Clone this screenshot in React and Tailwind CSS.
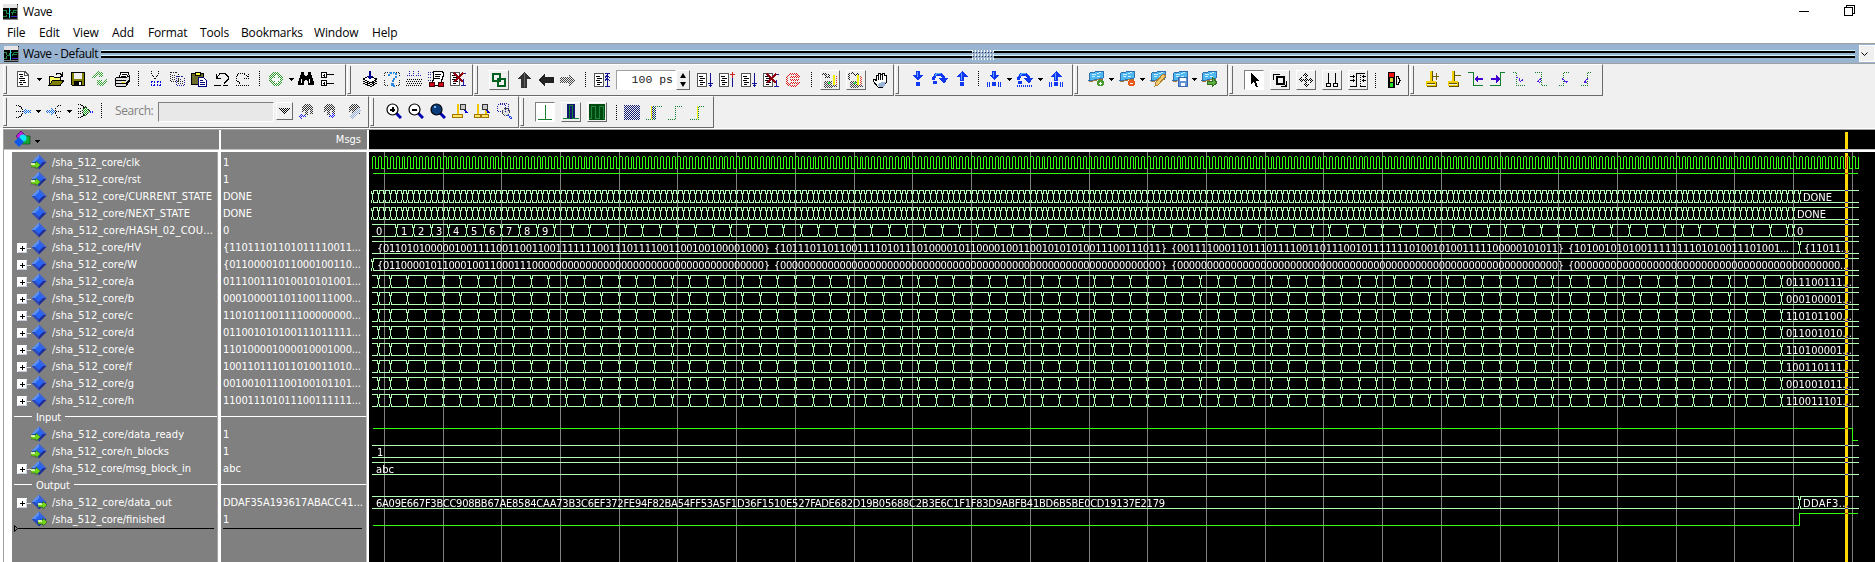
import React from "react";

/* ---------- icon helpers ---------- */
const Ico = ({ children, dis, s = 16, className = "" }) => (
  <span className={"flex h-[22px] w-[22px] shrink-0 items-center justify-center " + className}>
    <svg width={s} height={s} viewBox={`0 0 ${s} ${s}`} shapeRendering="crispEdges" fill="none" className="block">
      <g mask={dis ? "url(#dither)" : undefined}>{children}</g>
    </svg>
  </span>
);

const Caret = ({ className = "w-[11px]" }) => (
  <span className={"flex h-[22px] shrink-0 items-center justify-center " + className}>
    <svg width="5" height="3" viewBox="0 0 5 3" shapeRendering="crispEdges"><path d="M0 0h5v1H0zM1 1h3v1H1zM2 2h1v1H2z" fill="#000" /></svg>
  </span>
);

const Sep = ({ className = "w-[11px]" }) => (
  <span className={"flex h-[22px] shrink-0 items-center justify-center " + className}>
    <svg width="1" height="16" viewBox="0 0 1 16" shapeRendering="crispEdges"><path d="M.5 0v16" stroke="#000" strokeDasharray="1 1" /></svg>
  </span>
);

const Btn = ({ children, on, className = "" }) => (
  <span
    className={
      "flex h-5 w-5 shrink-0 items-center justify-center border " +
      (on ? "border-t-[#808080] border-l-[#808080] border-r-white border-b-white bg-white " : "border-t-white border-l-white border-r-[#696969] border-b-[#696969] bg-[#f0f0f0] ") +
      className
    }
  >
    <svg width="16" height="16" viewBox="0 0 16 16" shapeRendering="crispEdges" fill="none">{children}</svg>
  </span>
);

const Group = ({ w, pt = "pt-[3px]", pl = "pl-[5px]", children }) => (
  <div className={"flex h-8 shrink-0 border-r border-b border-[#696969] border-t border-t-white mr-[1px] " + w}>
    <div className="mt-px h-[28px] w-[4px] shrink-0 border-r border-b border-[#696969] border-l border-l-white" />
    <div className={"flex items-start " + pt + " " + pl}>{children}</div>
  </div>
);

const WaveIcon = () => (
  <svg width="15" height="16" viewBox="0 0 15 16" shapeRendering="crispEdges" fill="none">
    <rect width="15" height="16" fill="#222" />
    <rect width="14" height="4" fill="#e4e4e4" />
    <rect y="4" width="14" height="10" fill="#000" />
    <path d="M0 6.500h3v3h3v-3h2M8 8.500h2v-2h4M0 12.500h3v-2M9 10.500v-2h4" stroke="#1c8a3c" />
    <path d="M6.500 4v10" stroke="#38d8e8" />
    <path d="M8 12.500h6" stroke="#3c28c8" />
    <path d="M14.500 1v15M0 15h15" stroke="#808080" />
  </svg>
);

/* ---------- drawings for the tool bars ---------- */
const Page = ({ x = 0 }) => (
  <g>
    <path d={`M${x + 0.5} 1.500h9v13h-9z`} fill="#fff" stroke="#555" />
    <path d={`M${x + 2} 4.500h4M${x + 3} 6.500h5M${x + 2} 8.500h4M${x + 3} 10.500h5M${x + 3} 12.500h3`} stroke="#000" />
  </g>
);
const NewDoc = () => (
  <g>
    <path d="M2 .5h8l3 3v12H2z" fill="#fff" stroke="#555" />
    <path d="M9.500 1v3h3" stroke="#555" />
    <path d="M4 3.500h4M5 5.500h3M4 7.500h6M5 9.500h5M4 11.500h3M8 11.500h3M5 13.500h3" stroke="#000" />
  </g>
);
const Open = () => (
  <g>
    <path d="M1 14V6l1-1h3l1 1h6v3" fill="#ffff66" stroke="#000" />
    <path d="M1 14.500l4-5.500h11l-4 5.500z" fill="#808000" stroke="#000" />
    <path d="M8 3.500l1-1h3l2 2M14.500 1v4h-3" stroke="#000" />
  </g>
);
const Save = () => (
  <g>
    <path d="M1.500 1.500h13v13h-12l-1-1z" fill="#808000" stroke="#000" />
    <path d="M4 2h8v6H4z" fill="#f0f0f0" />
    <path d="M4 10h8v4H4z" fill="#000" />
    <path d="M9 11h2v3H9z" fill="#fff" />
  </g>
);
const Refresh = () => (
  <g fill="#38a838">
    <path d="M0 7l2-4 4-3 4 1 1-1v6H5l2-2-2 0-2 3z" />
    <path d="M16 8l-2 4-4 3-4-1-1 1V9h6l-2 2 2 0 2-3z" />
  </g>
);
const Print = () => (
  <g>
    <path d="M5 7l2-6h8l-2 6" fill="#fff" stroke="#000" />
    <path d="M8 3.500h5M7 5.500h5" stroke="#000" />
    <path d="M1 8l2-2h10l2-1v6l-3 4H2l-1-2z" fill="#e0e0e0" stroke="#000" />
    <path d="M1 9.500h11M2 12.500h10l3-3" stroke="#000" />
    <path d="M8 11h3v1H8z" fill="#ffea00" />
  </g>
);
const Cut = () => (
  <g>
    <path d="M4.500 0v3l4 6M11.500 0v3l-4 6" stroke="#000" strokeDasharray="1 1" />
    <path d="M4 10h3v4H4zM10 10h3v4h-3z" stroke="#0000e0" strokeDasharray="2 1" />
  </g>
);
const Copy = () => (
  <g>
    <path d="M1.500 1.500h6l2 2v7h-8z" stroke="#222" strokeDasharray="1 1" />
    <path d="M7.500 5.500h6l2 2v7h-8z" stroke="#2020a0" strokeDasharray="1 1" />
    <path d="M3 4.500h4M3 6.500h4M3 8.500h4M9 8.500h4M9 10.500h5M9 12.500h5" stroke="#333" strokeDasharray="1 1" />
  </g>
);
const Paste = () => (
  <g>
    <path d="M.5 2.500h12v11H.5z" fill="#6b6b2a" stroke="#000" />
    <path d="M4 1h5v3H4z" fill="#ffff40" stroke="#000" />
    <path d="M7.500 6.500h5l3 3v6h-8z" fill="#fff" stroke="#000080" />
    <path d="M9 9.500h3M9 11.500h5M9 13.500h5" stroke="#000080" />
  </g>
);
const Undo = () => (
  <g stroke="#000">
    <path d="M3 7.500V3M3 7.500h4.500M3.500 7L7 2.500h5l3 3v3l-4 4" />
    <path d="M1 14.500h14" strokeDasharray="7 2" />
  </g>
);
const Redo = () => (
  <g stroke="#000" strokeDasharray="1 1">
    <path d="M13.500 3v5M13.500 7.500H9M13 6L9 2.500H4L1 5.500v3l4 4" />
    <path d="M1 14.500h14" />
  </g>
);
const AddCircle = () => (
  <g>
    <circle cx="8" cy="8" r="7" fill="#2fa02f" />
    <path d="M6.500 4h3v2.500H12v3H9.500V12h-3V9.500H4v-3h2.500z" fill="#fff" />
  </g>
);
const Binoc = ({ c = "#000" }) => (
  <g fill={c}>
    <path d="M3 1h3v3H3zM10 1h3v3h-3zM2 4h5v3H2zM9 4h5v3H9zM1 7h6v3H1zM9 7h6v3H9zM0 10h6v4H0zM10 10h6v4h-6zM6 5h4v4H6z" />
    <path d="M3 8h1v4H3zM11 8h1v4h-1z" fill="#fff" />
  </g>
);
const Tree = () => (
  <g stroke="#000">
    <path d="M1.500 1.500h5v5h-5zM1.500 9.500h5v5h-5z" fill="#fff" />
    <path d="M3 4.500h2M4.500 3v3M3 12.500h2M4.500 11v3M7 3.500h7M7 12.500h7" />
  </g>
);
const Stack = () => (
  <g stroke="#000">
    <path d="M1 8l6-3 8 3-6 4zM1 10l8 3.500 6-3.500M1 12l8 3.500 6-3.500" fill="#fff" />
    <path d="M8 0v5" stroke="#000090" strokeWidth="2" />
    <path d="M5 5h6L8 8.500z" fill="#000090" stroke="none" />
  </g>
);
const Question = () => (
  <g>
    <path d="M.5 5V1.500h3M12 1.500h3.500V5M15.500 9v5.500h-4M4 14.500H.5V9" stroke="#222" strokeDasharray="1 1" />
    <path d="M5 5V3l2-1.500h3L12 3v3L8.500 9v2M8 13h2v2H8z" stroke="#2a88e0" strokeWidth="2" strokeDasharray="2 1" />
  </g>
);
const Grid = () => (
  <g>
    <path d="M1 8.500h15M0 10.500h15M1 12.500h15M0 14.500h15" stroke="#000" strokeDasharray="1 1" />
    <path d="M3.500 0v6M12.500 0v6M1 4.500h5M10 4.500h5M7.500 0v5" stroke="#2020b0" strokeDasharray="1 1" />
  </g>
);
const Truck = () => (
  <g>
    <path d="M5 .5h9l2 2-4 12H3l2-5z" fill="#fff" stroke="#000" />
    <path d="M7 3.500h6M7 5.500h5M6 7.500h6" stroke="#000" />
    <path d="M0 1.500h5M0 3.500h4M0 6.500h4M0 9.500h3" stroke="#2a2a9a" strokeDasharray="1 1" />
    <path d="M1 11h5v4H1zM10 11h5v4h-5z" fill="#d00018" stroke="#400" />
  </g>
);
const PageX = () => (
  <g>
    <Page />
    <path d="M11 2.500h5M13.500 8v6M11 14.500h5" stroke="#2020a0" />
    <path d="M4 2l9 9M13 2l-9 9" stroke="#900010" strokeWidth="2" />
  </g>
);
const ArrowUp = () => (
  <g>
    <path d="M8 0L1 7h4v9h6V7h4z" fill="#333" />
    <path d="M8 1v14" stroke="#666" />
  </g>
);
const ArrowLeft = ({ c = "#222" }) => <path d="M0 8l7-6v3h9v6H7v3z" fill={c} />;
const ArrowRight = ({ c = "#444" }) => <path d="M16 8L9 2v3H0v6h9v3z" fill={c} />;
const RunPage = ({ k }) => (
  <g>
    <Page />
    {k === "top" && <path d="M11 1.500h5M13.500 1v13M11 5.500l2-2 3 2M11 8.500l2-2 3 2M11 14.500h5" stroke="#101090" />}
    {k === "run" && <path d="M13.500 1v14M11 11.500h5M12 13.500h3" stroke="#101090" />}
    {k === "up" && <path d="M13.500 0v6M11 2.500h5" stroke="#d02020" />}
    {k === "up" && <path d="M13.500 6v9" stroke="#101090" />}
  </g>
);
const Stop = () => (
  <g stroke="#e02020" strokeWidth="2">
    <path d="M5 2h6l3 3v1M5 14h6l3-3v-1M2 5v6M5 5h8M5 8h9M5 11h8" />
    <path d="M2 5l3-3M2 11l3 3" />
  </g>
);
const Chart = ({ m }) => (
  <g>
    <path d={m ? "M1 8V2l3-1 3 2 3-1v5" : "M0 2h4v3h3V2"} stroke="#222" strokeWidth="1.500" mask="url(#dither)" />
    <path d="M2 9h8v7H2z" fill="#444" mask="url(#dither)" />
    <path d={m ? "M9 3h2v10H9z" : "M11 3h2v10h-2z"} fill="#f0f000" />
    <path d={m ? "M12 4h2v9h-2z" : "M14 3h1v10h-1z"} fill="#e04030" mask="url(#dither)" />
    <path d="M9 13h6v2H9z" fill="#444" mask="url(#dither)" />
    <path d="M6 10h2v2H6z" fill="#20e040" />
  </g>
);
const Hand = () => (
  <g>
    <path d="M4 9V3h2V1h2v1h2V1h2v2h2v8l-3 4H6L1 9V7h2z" fill="#fff" stroke="#000" />
    <path d="M6.500 3v5M8.500 3v5M10.500 3v5" stroke="#000" />
    <path d="M6 12l4-2 4 0-2 5H7z" fill="#9ab4d8" />
  </g>
);
const BDown = ({ b }) => (
  <g fill="#1038f0">
    <path d={b ? "M6 0h4v4h3L8 9 3 4h3zM6 11h4v4H6z" : "M6 0h4v4h3L8 10 3 4h3zM6 11h4v4H6z"} />
    {b && <path d="M1 11h1v5H1zM3 11h1v5H3zM12 11h1v5h-1zM14 11h1v5h-1z" />}
    <path d="M7 1h1v5H7z" fill="#60a0ff" />
  </g>
);
const BUp = ({ b }) => (
  <g fill="#1038f0">
    <path d="M6 10h4V6h4L8 0 2 6h4zM6 11h4v4H6z" />
    {b && <path d="M1 11h1v5H1zM3 11h1v5H3zM12 11h1v5h-1zM14 11h1v5h-1z" />}
    <path d="M7 2h1v7H7z" fill="#60a0ff" />
  </g>
);
const BOver = ({ b }) => (
  <g>
    <path d="M1.500 9V7l3-4h4l3 3v3" stroke="#1038f0" strokeWidth="3" />
    <path d="M7 7h9l-4 6z" fill="#1038f0" />
    <path d="M1 10h4v3H1z" fill="#1038f0" />
    <path d="M3 4.500l2-2h4" stroke="#50b0ff" />
    {b && <path d="M0 15h16" stroke="#1038f0" strokeWidth="2" strokeDasharray="1 1" />}
  </g>
);
const Book = ({ k }) => (
  <g>
    <path d="M2 2l5-1 2-1h6v7l-4 1-5 1H1z" fill="#50b8f0" stroke="#3070b0" />
    <path d="M4 3h4M9 2.500l4-1M4 5h3M9 5.500h3" stroke="#c8f0ff" />
    <path d="M1 10h4l4-1 6-1" stroke="#a07840" />
    {k === "add" && <><circle cx="12.500" cy="12" r="3.500" fill="#4a9a30" /><path d="M11 12h3M12.500 10.500v3" stroke="#fff" /></>}
    {k === "del" && <><circle cx="12.500" cy="12" r="3.500" fill="#e85a18" /><path d="M11 12h3" stroke="#fff" /></>}
    {k === "edit" && <path d="M5 15l1-4 7-8 3 2-8 9z" fill="#f0c870" stroke="#b08030" />}
    {k === "save" && <><path d="M6.500 6.500h9v9h-9z" fill="#6090d8" stroke="#3868b0" /><path d="M8 7h6v3H8zM9 12h4v3H9z" fill="#fff" /></>}
    {k === "go" && <path d="M6 10h5V6l5 5.500-5 4.500v-3H6z" fill="#60b040" stroke="#307020" />}
  </g>
);
const Mag = ({ k }) => (
  <g>
    <path d="M10 10l5 5" stroke="#0000b0" strokeWidth="3" shapeRendering="auto" />
    <circle cx="6.500" cy="6.500" r="5.500" fill={k === "full" ? "#0a3c7c" : "#fff"} stroke="#000" shapeRendering="auto" strokeWidth="1.200" />
    {k !== "full" && <path d="M4 6.500h5" stroke="#000" strokeWidth="2" />}
    {k === "in" && <path d="M6.500 4v5" stroke="#000" strokeWidth="2" />}
    {k === "full" && <path d="M4 3h2v2H4z" fill="#80b8f0" />}
  </g>
);
const Post = ({ x = 0, w = 9 }) => (
  <g>
    <path d={`M${x + Math.floor(w / 2)} 1h2v10h-2z`} fill="#f0c800" />
    <path d={`M${x + 0.5} 11.500h${w - 1}v3h-${w - 1}z`} fill="#ffe860" stroke="#a07000" />
  </g>
);
const SmallMag = () => (
  <g>
    <path d="M12 6l3 4" stroke="#0000d0" strokeWidth="2" />
    <circle cx="11" cy="4" r="3" fill="#c8c8c8" stroke="#333" />
  </g>
);
const MergeIco = ({ k }) => (
  <g>
    {k === "l" && <><path d="M1 2.500h3l4 4M1 14.500h3l4-4M1 8.500h7" stroke="#000" strokeDasharray="1 1" /><path d="M7 8l4-4v3h5v3h-5v3z" fill="#1070e8" mask="url(#dither)" /></>}
    {k === "r" && <><path d="M15 2.500h-3l-3 4v4l3 4h3M10 8.500h6" stroke="#000" strokeDasharray="1 1" /><path d="M9 8L5 4v3H0v3h5v3z" fill="#1070e8" mask="url(#dither)" /></>}
    {k === "g" && <><path d="M1 1.500h3l3 3M1 5.500h3M1 10.500h3M1 14.500h3l3-3M1 8.500h3" stroke="#000" strokeDasharray="1 1" /><path d="M8 3l5 5-5 5-3-5z" fill="#18a018" mask="url(#dither)" /><path d="M8 3l5 5-5 5-3-5z" stroke="#222" strokeDasharray="1 1" /><path d="M13 8.500h3" stroke="#2020f0" strokeWidth="2" strokeDasharray="1 1" /></>}
  </g>
);
const FindIco = ({ k }) => (
  <g>
    <path d="M4 10V5l3-4h6l2 4v6h-3V7h-2v5H7V8" fill="#333" mask="url(#dither)" />
    {k === "l" && <path d="M0 13l4-4v3h4v2H4v2z" fill="#2020f0" mask="url(#dither)" />}
    {k === "r" && <path d="M16 13l-4-4v3H9v2h3v2z" fill="#2020f0" mask="url(#dither)" />}
    {k === "p" && <path d="M6 15l9-9" stroke="#90b0d8" strokeWidth="3" mask="url(#dither)" />}
  </g>
);
const Anchor = ({ k }) => (
  <g>
    <path d="M6 0h2v11H6z" fill="#f0d000" />
    <path d="M8.500 0v11" stroke="#605000" />
    <path d={k === "+" ? "M9 5.500h6M12.500 2v7" : "M9 4.500h6"} stroke="#706000" />
    <path d="M2 10h10v5H2z" fill="#f0d000" />
    <path d="M3 12h8v2H3z" fill="#f0f0f0" />
    <path d="M3 15h10v1H3zM12 11h1v4h-1zM3 12h8v1H3z" fill="#605000" />
  </g>
);
const Edge = ({ k }) => {
  const D = {
    prev: ["M0 1.500h5.500v13H15", "M6 8l4-4v3h5v2h-5v3z"],
    next: ["M15 1.500h-4.500v13H0", "M10 8L6 4v3H1v2h5v3z"],
  };
  return (
    <g>
      <path d={D[k][0]} stroke="#108030" />
      <path d={D[k][1]} fill="#4000d0" />
    </g>
  );
};
const EdgeDis = ({ k }) => {
  const D = {
    a: ["M1 1.500h3.500v13H13", "M4 6.500h3v3l2 1 2-2"],
    b: ["M1 1.500h6.500v13H13", "M7 7.500l-3 3h3l-2 1"],
    c: ["M13 1.500H7.500v13H3", "M6 7.500l3 3h2l-1 1"],
    d: ["M13 1.500h-3.500v13H2", "M10 7.500l-4 4h3l-3-1"],
  };
  return (
    <g>
      <path d={D[k][0]} stroke="#108030" strokeDasharray="1 1" />
      <path d={D[k][1]} stroke="#5020e0" strokeDasharray="2 1" />
    </g>
  );
};

/* ---------- tool bars ---------- */
const Toolbars = () => (
  <div className="h-16 bg-[#f0f0f0] pl-[3px]">
    <div className="flex h-8">
      <Group w="w-[343px]">
        <Ico><NewDoc /></Ico><Caret /><Ico><Open /></Ico><Ico><Save /></Ico><Ico dis><Refresh /></Ico><Ico><Print /></Ico>
        <Sep /><Ico><Cut /></Ico><Ico><Copy /></Ico><Ico><Paste /></Ico><Ico><Undo /></Ico><Ico><Redo /></Ico>
        <Sep /><Ico dis><AddCircle /></Ico><Caret className="w-[8px]" /><Ico><Binoc /></Ico><Ico><Tree /></Ico>
      </Group>
      <Group w="w-[126px]" pl="pl-[8px]">
        <Ico><Stack /></Ico><Ico><Question /></Ico><Ico><Grid /></Ico><Ico><Truck /></Ico><Ico><PageX /></Ico>
      </Group>
      <Group w="w-[420px]" pt="pt-[5px]" pl="pl-[11px]">
        <Btn className="mr-1">
          <path d="M2 2h7v7H2zM7 7h7v7H7z" stroke="#006020" strokeWidth="2" />
        </Btn>
        <div className="-mt-px flex">
          <Ico><ArrowUp /></Ico><Ico><ArrowLeft /></Ico><Ico dis><ArrowRight /></Ico><Sep className="w-[12px]" />
          <Ico><RunPage k="top" /></Ico>
        </div>
        <div className="ml-[3px] flex h-5 w-[60px] items-center justify-end border border-[#a0a0a0] border-r-white border-b-white bg-white pr-[2px] font-['Liberation_Mono'] text-[11.5px] leading-none text-[#202020]">100 ps</div>
        <div className="flex h-5 w-[14px] flex-col items-center justify-around border border-white border-r-[#696969] border-b-[#696969]">
          <svg width="6" height="5" viewBox="0 0 6 5"><path d="M0 5l3-5 3 5z" /></svg>
          <svg width="6" height="5" viewBox="0 0 6 5"><path d="M0 0l3 5 3-5z" /></svg>
        </div>
        <div className="ml-[4px] -mt-px flex">
          <Ico><RunPage k="run" /></Ico><Ico><RunPage k="up" /></Ico><Ico><RunPage k="run" /></Ico><Ico><PageX /></Ico><Ico dis className="w-[20px]"><Stop /></Ico><Sep className="w-[14px]" />
        </div>
        <Btn className="ml-[2px]"><Chart /></Btn>
        <Btn className="mx-[6px]"><Chart m /></Btn>
        <Ico className="-mt-px -ml-[3px]"><Hand /></Ico>
      </Group>
      <Group w="w-[178px]" pl="pl-[8px]">
        <Ico><BDown /></Ico><Ico><BOver /></Ico><Ico><BUp /></Ico><Sep className="w-[10px]" />
        <Ico><BDown b /></Ico><Caret className="w-[9px]" /><Ico><BOver b /></Ico><Caret className="w-[9px]" /><Ico><BUp b /></Ico>
      </Group>
      <Group w="w-[154px]" pl="pl-[7px]">
        <Ico><Book k="add" /></Ico><Caret className="w-[9px]" /><Ico><Book k="del" /></Ico><Caret className="w-[9px]" />
        <Ico><Book k="edit" /></Ico><Ico><Book k="save" /></Ico><Caret className="w-[7px]" /><Ico><Book k="go" /></Ico>
      </Group>
      <Group w="w-[180px]" pt="pt-[5px]" pl="pl-[11px]">
        <Btn on className="mr-[6px]"><path d="M5 1v11l3-2 2 5h2l-2-6h3z" fill="#000" /></Btn>
        <Btn className="mr-[6px]"><path d="M1.500 8V2.500H8M14.500 9v5.500H9" stroke="#000" /><path d="M5 5h7v7H5z" stroke="#000" strokeWidth="2" /><path d="M12 12l3 3" stroke="#000" /></Btn>
        <Btn className="mr-[6px]"><g mask="url(#dither)"><path d="M8 0l3 4H9v3h3V5l4 3-4 3V9H9v3h2l-3 4-3-4h2V9H4v2L0 8l4-3v2h3V4H5z" fill="#000" /></g></Btn>
        <Btn className="mr-[6px]"><path d="M4.500 1v10M11.500 1v10M2.500 11.500h4v3h-4zM9.500 11.500h4v3h-4z" stroke="#000" /></Btn>
        <Btn><path d="M0 4.500h5M3.500 3v3M0 8.500h5M3.500 7v3M0 14.500h6.500V1.500h8M12 4.500h4M12 8.500h4M13.500 3v3M13.500 7v3M10 14.500h6" stroke="#000" /><path d="M10.500 3v11" stroke="#000" strokeDasharray="1 1" /></Btn>
        <Sep className="w-[15px]" />
        <Ico className="-mt-px">
          <path d="M2 0h7v16H2z" fill="#000" />
          <circle cx="5.500" cy="3" r="2.500" fill="#f01010" /><circle cx="5.500" cy="8" r="2" fill="#d8d840" /><circle cx="5.500" cy="13" r="2" fill="#20e030" />
          <path d="M10.500 4v9M11 4.500h1l2 4-2 4h-1" stroke="#000" />
        </Ico>
      </Group>
      <Group w="w-[193px]" pl="pl-[7px]">
        <Ico><Anchor k="+" /></Ico><Ico><Anchor k="-" /></Ico><Ico><Edge k="prev" /></Ico><Ico><Edge k="next" /></Ico>
        <Ico><EdgeDis k="a" /></Ico><Ico><EdgeDis k="b" /></Ico><Ico><EdgeDis k="c" /></Ico><Ico><EdgeDis k="d" /></Ico>
      </Group>
    </div>
    <div className="flex h-8">
      <Group w="w-[366px]">
        <Ico><MergeIco k="l" /></Ico><Caret className="w-[9px]" /><Ico><MergeIco k="r" /></Ico><Caret className="w-[9px]" /><Ico><MergeIco k="g" /></Ico>
        <Sep />
        <span className="ml-[8px] flex h-[22px] w-[43px] items-center font-['Open_Sans'] text-[12px] tracking-[-0.4px] text-[#808080]">Search:</span>
        <span className="mt-[2px] h-5 w-[116px] border border-[#808080] border-r-white border-b-white bg-[#e8e8e8]" />
        <span className="mt-[2px] ml-[2px] flex h-[18px] w-[17px] items-center justify-center border border-white border-r-[#696969] border-b-[#696969]">
          <svg width="11" height="6" viewBox="0 0 11 6" shapeRendering="crispEdges"><path d="M0 0h11L6 6H5z" fill="#000" mask="url(#dither)" /></svg>
        </span>
        <Ico className="ml-[2px] w-[20px]"><FindIco k="l" /></Ico><Ico className="w-[20px]"><FindIco k="r" /></Ico><Ico className="ml-[3px]"><FindIco k="p" /></Ico>
      </Group>
      <Group w="w-[149px]" pl="pl-[9px]">
        <Ico><Mag k="in" /></Ico><Ico><Mag k="out" /></Ico><Ico><Mag k="full" /></Ico>
        <Ico><Post w={11} /><SmallMag /></Ico><Ico><Post w={7} /><Post x={7} w={8} /><SmallMag /></Ico>
        <Ico><path d="M1.500 1.500h8v7h-8zM4 .5h8v8" stroke="#2020a0" strokeDasharray="1 1" /><circle cx="10" cy="9" r="3.500" stroke="#444" fill="#ccc" mask="url(#dither)" /><circle cx="10" cy="9" r="3.500" stroke="#444" strokeDasharray="1 1" /><path d="M12 12l4 4" stroke="#2040e0" strokeWidth="2" strokeDasharray="1 1" /></Ico>
      </Group>
      <Group w="w-[194px]" pt="pt-[5px]" pl="pl-[11px]">
        <Btn on className="mr-[6px]"><path d="M8.500 1v14M1 15.500h14" stroke="#108030" /></Btn>
        <Btn className="mr-[6px]"><path d="M4 0h8v15H4z" fill="#101870" /><path d="M0 14.500h6.500v-13h3v13H16" stroke="#108030" /></Btn>
        <Btn><path d="M0 0h16v16H0z" fill="#004a10" /><path d="M0 14.500h2v-12h4v12h4v-12h4v12h2" stroke="#208840" /></Btn>
        <Sep className="w-[14px] pl-[4px]" />
        <Ico dis><path d="M0 0h16v15H0z" fill="#101870" /></Ico>
        <Ico><path d="M5 1h5v13H5z" fill="#101870" mask="url(#dither)" /><path d="M5.500 1v13" stroke="#e0e000" /><path d="M0 14.500h8.500v-13H16" stroke="#108030" strokeDasharray="1 1" /></Ico>
        <Ico><path d="M0 14.500h7.500v-13H15" stroke="#108030" strokeDasharray="1 1" /></Ico>
        <Ico><path d="M7.500 1v13" stroke="#f0f000" /><path d="M0 14.500h8.500v-13H15" stroke="#108030" strokeDasharray="1 1" /></Ico>
      </Group>
    </div>
  </div>
);

/* ---------- signal table: w and vw are the text widths in the two columns ---------- */
const P = "/sha_512_core/";
const ROWS = [
  { n: "clk", w: 88, v: "1", d: "in" },
  { n: "rst", w: 89, v: "1", d: "in" },
  { n: "CURRENT_STATE", w: 160, v: "DONE", vw: 29 },
  { n: "NEXT_STATE", w: 138, v: "DONE", vw: 29 },
  { n: "HASH_02_COU...", w: 161, v: "0" },
  { n: "HV", w: 89, v: "{11011101101011110011...", vw: 138, x: 1 },
  { n: "W", w: 85, v: "{01100001011000100110...", vw: 138, x: 1 },
  { n: "a", w: 82, v: "011100111010010101001...", vw: 138, x: 1 },
  { n: "b", w: 82, v: "000100001101100111000...", vw: 138, x: 1 },
  { n: "c", w: 81, v: "110101100111100000000...", vw: 138, x: 1 },
  { n: "d", w: 82, v: "011001010100111011111...", vw: 138, x: 1 },
  { n: "e", w: 82, v: "110100001000010001000...", vw: 138, x: 1 },
  { n: "f", w: 80, v: "100110111011010011010...", vw: 138, x: 1 },
  { n: "g", w: 82, v: "001001011100100101101...", vw: 138, x: 1 },
  { n: "h", w: 82, v: "110011101011100111111...", vw: 138, x: 1 },
  { div: "Input" },
  { n: "data_ready", w: 132, v: "1", d: "in" },
  { n: "n_blocks", w: 117, v: "1", d: "in" },
  { n: "msg_block_in", w: 139, v: "abc", vw: 18, d: "in", x: 1 },
  { div: "Output" },
  { n: "data_out", w: 120, v: "DDAF35A193617ABACC41...", vw: 140, d: "out", x: 1 },
  { n: "finished", w: 113, v: "1", d: "out" },
];

const Label = ({ w, box, children }) => (
  <svg width={box} height="17" viewBox={`0 0 ${box} 17`} className="block shrink-0">
    <text x="0" y="13" fontSize="11" fill="#fff" textLength={w} lengthAdjust="spacing">{children}</text>
  </svg>
);

const Diamond = ({ d }) => (
  <svg width="16" height="16" viewBox="0 0 16 16" className="mt-px shrink-0">
    <path d="M8 .5L.5 8h7.500z" fill="#5c90ee" /><path d="M8 .5L15.500 8H8z" fill="#3c64d8" />
    <path d="M.5 8L8 15.500V8z" fill="#2c48b8" /><path d="M15.500 8L8 15.500V8z" fill="#202c98" />
    <path d="M8 4l4 4-4 4-4-4z" fill="#2464f8" />
    {d === "in" && <g><path d="M0 9h5V7l4.500 4L5 15v-2H0z" fill="#70d818" stroke="#184808" strokeWidth=".5" /><path d="M0 10h4" stroke="#f8ffe0" strokeWidth="1.500" /></g>}
    {d === "out" && <g><path d="M7 9h5V7l4 4-4 4v-2H7z" fill="#70d818" stroke="#184808" strokeWidth=".5" /><path d="M7 10h4" stroke="#f8ffe0" strokeWidth="1.500" /></g>}
  </svg>
);

const NameRow = ({ r }) =>
  r.div ? (
    <div className="flex h-[17px] items-center pl-[2px]">
      <span className="h-px w-[18px] bg-white" />
      <span className="mx-1 mt-[2px] tracking-[-0.1px]">{r.div}</span>
      <span className="h-px flex-1 bg-white" />
    </div>
  ) : (
    <div className="flex h-[17px] items-center pl-[5px]">
      {r.x ? (
        <>
          <svg width="10" height="10" viewBox="0 0 10 10" shapeRendering="crispEdges" className="mt-[3px] shrink-0"><path d="M0 0h10v10H0z" fill="#fff" /><path d="M9 1h1v9H1V9h8z" fill="#c8d0e0" /><path d="M3 5.500h5M5.500 3v5" stroke="#000" /></svg>
          <span className="mt-[3px] h-px w-[4px] bg-white/70" />
        </>
      ) : (
        <span className="w-[14px]" />
      )}
      <Diamond d={r.d} />
      <span className="ml-[5px]"><Label w={r.w} box={164}>{P + r.n}</Label></span>
    </div>
  );

/* ---------- wave drawing; the view box starts at the pane's corner (369,152) ---------- */
const OX = 369;
const OY = 152;
const CLK = 5.8718;
const G0 = 384.4;
const END = 1859;
const mid = (i) => 162 + 17 * i;

const hexBits = (h) => h.split("").map((c) => parseInt(c, 16).toString(2).padStart(4, "0")).join("");

const range = (from, step, to) => {
  const out = [];
  for (let x = from; x < to + 0.5; x += step) out.push(Math.floor(x));
  return out;
};

const busPath = (i, xs, start = 372) => {
  const t = mid(i) - 6 + 0.5;
  const b = mid(i) + 6 + 0.5;
  let d = "";
  let s = start;
  xs.forEach((x) => {
    if (x > s) d += `M${s} ${t}H${x}M${s} ${b}H${x}`;
    d += `M${x - 0.5} ${t}v3M${x + 1.5} ${t}v3M${x + 0.5} ${t + 2.5}V${b - 2.5}M${x - 0.5} ${b}v-3M${x + 1.5} ${b}v-3`;
    s = x + 1;
  });
  return d + `M${s} ${t}H${END}M${s} ${b}H${END}`;
};

const clockPath = () => {
  const t = 156.5;
  const b = 168.5;
  let d = "";
  for (let k = 0; k <= 252; k++) {
    const x = Math.floor(G0 + (k - 2) * CLK);
    const f = Math.floor(G0 + (k - 1.5) * CLK);
    const n = Math.floor(G0 + (k - 1) * CLK);
    if (f > 1857) break;
    d += `M${x + 0.5} ${b}V${t + 0.5}M${x + 1} ${t}H${f}M${f + 0.5} ${t + 0.5}V${b}M${f} ${b}H${Math.min(n + 0.5, 1858)}`;
  }
  return d + `M1858.5 ${b + 0.5}V${t}`;
};

const every3 = range(G0 + CLK, CLK * 3, 1782);
const TRACES = {
  state: range(G0 - 2 * CLK, CLK, 1800),
  next: range(G0 - 2 * CLK, CLK, 1794),
  count: [...range(G0 + 2 * CLK, CLK * 3, 1788), 1793],
  regs: [378, ...every3],
};
const REG_TEXT = ["011100111...", "000100001...", "110101100...", "011001010...", "110100001...", "100110111...", "001001011...", "110011101..."];

const T = ({ x, i, w, children }) => (
  <text x={x} y={mid(i) + 5} textLength={w} lengthAdjust="spacing">{children}</text>
);

const Waves = () => {
  const grid = Array.from({ length: 26 }, (_, n) => Math.floor(384.4 + 58.718 * n) + 0.5);
  return (
    <svg width="1506" height="410" viewBox={`${OX} ${OY} 1506 410`} className="isolate block bg-black">
      <g shapeRendering="crispEdges" fill="none">
        {grid.map((x) => <path key={x} d={`M${x} 152V562`} stroke="#808080" />)}
        <g stroke="#33ff11">
          <path d={clockPath()} />
          <path d="M373 173.500H1858M373 428.500H1852.500V440.500H1858M373 525.500H1799.500V513.500H1858" />
        </g>
        <g stroke="#b3ffb3">
          <path d={busPath(2, TRACES.state)} />
          <path d={busPath(3, TRACES.next)} />
          <path d={busPath(4, TRACES.count)} />
          <path d={busPath(5, [1799])} />
          <path d={busPath(6, [372])} />
          {REG_TEXT.map((_, k) => <path key={k} d={busPath(7 + k, TRACES.regs)} />)}
          <path d={busPath(17, [])} />
          <path d={busPath(18, [])} />
          <path d={busPath(20, [1799])} />
        </g>
      </g>
      <g fill="#fff" fontFamily="'DejaVu Sans Condensed','DejaVu Sans',sans-serif" fontSize="11">
        {"0123456789".split("").map((c, k) => (
          <T key={c} x={k === 0 ? 376 : Math.floor(396.1 + (k - 1) * 17.615) + 5} i={4}>{c}</T>
        ))}
        <T x={1803} i={2} w={29}>DONE</T>
        <T x={1797} i={3} w={29}>DONE</T>
        <T x={1797} i={4}>0</T>
        <T x={377} i={5} w={393}>{"{" + hexBits("6A09E667F3BCC908") + "}"}</T>
        <T x={774} i={5} w={393}>{"{" + hexBits("BB67AE8584CAA73B") + "}"}</T>
        <T x={1171} i={5} w={393}>{"{" + hexBits("3C6EF372FE94F82B") + "}"}</T>
        <T x={1568} i={5} w={221}>{"{" + hexBits("A54FF53A5").slice(0, 34) + "..."}</T>
        <T x={1804} i={5} w={46}>{"{11011..."}</T>
        <T x={377} i={6} w={393}>{"{" + hexBits("6162638000000000") + "}"}</T>
        <T x={774} i={6} w={393}>{"{" + "0".repeat(64) + "}"}</T>
        <T x={1171} i={6} w={393}>{"{" + "0".repeat(64) + "}"}</T>
        <T x={1568} i={6} w={281}>{"{" + "0".repeat(44) + "..."}</T>
        {REG_TEXT.map((s, k) => <T key={s} x={1786} i={7 + k} w={66}>{s}</T>)}
        <T x={377} i={17}>1</T>
        <T x={376} i={18} w={18}>abc</T>
        <T x={376} i={20} w={789}>6A09E667F3BCC908BB67AE8584CAA73B3C6EF372FE94F82BA54FF53A5F1D36F1510E527FADE682D19B05688C2B3E6C1F1F83D9ABFB41BD6B5BE0CD19137E2179</T>
        <T x={1803} i={20} w={46}>DDAF3...</T>
      </g>
      <path d="M1845 153h3v409h-3z" fill="#ffd800" shapeRendering="crispEdges" className="mix-blend-difference" />
    </svg>
  );
};

const MENU = [
  ["File", "w-[32px]"], ["Edit", "w-[34px]"], ["View", "w-[39px]"], ["Add", "w-[36px]"], ["Format", "w-[52px]"],
  ["Tools", "w-[41px]"], ["Bookmarks", "w-[73px]"], ["Window", "w-[58px]"], ["Help", "w-[30px]"],
];

export default function App() {
  return (
    <div className="flex h-[562px] w-[1875px] flex-col overflow-hidden bg-white font-['Open_Sans',sans-serif] text-[12px] leading-none text-black">
      <svg width="0" height="0" className="absolute">
        <defs>
          <pattern id="dots" width="2" height="2" patternUnits="userSpaceOnUse"><path d="M0 0h1v1H0zM1 1h1v1H1z" fill="#fff" shapeRendering="crispEdges" /></pattern>
          <mask id="dither" maskUnits="userSpaceOnUse" x="0" y="0" width="24" height="24"><rect width="24" height="24" fill="url(#dots)" /></mask>
        </defs>
      </svg>

      <div className="flex h-[23px] items-center pl-[3px]">
        <WaveIcon />
        <span className="ml-[5px] tracking-[-0.3px]">Wave</span>
        <span className="ml-auto mr-[25px] h-px w-[10px] bg-black" />
        <svg width="11" height="11" viewBox="0 0 11 11" shapeRendering="crispEdges" fill="none" stroke="#000" className="mt-[-3px] mr-[20px] ml-[10px]">
          <path d="M.5 2.500h8v8h-8zM2.500 2V.5h8v8H9" />
        </svg>
      </div>
      <div className="flex h-[20px] items-center pl-[7px] tracking-[-0.15px]">
        {MENU.map(([t, w]) => <span key={t} className={"whitespace-nowrap " + w}>{t}</span>)}
      </div>

      <div className="flex h-[21px] items-center border-t border-b border-[#a0a0a0] bg-[#99b4d1] pl-[4px]">
        <WaveIcon />
        <span className="ml-[4px] w-[79px] whitespace-nowrap tracking-[-0.45px]">Wave - Default</span>
        <div className="relative flex w-[1764px] flex-col gap-[2px]">
          <div className="h-[3px] border-t border-[#d0f4fc] bg-black" />
          <div className="h-[3px] border-t border-[#d0f4fc] bg-black" />
          <svg width="22" height="11" viewBox="0 0 22 11" shapeRendering="crispEdges" className="absolute -top-px left-[871px]">
            <path d="M0 0h22v11H0z" fill="#99b4d1" />
            <path d="M0 2h22M0 6h22M0 10h22" stroke="#fff" strokeWidth="1.500" strokeDasharray="1 2" />
            <path d="M1 3.500h22M1 7.500h22" stroke="#334" strokeDasharray="1 2" />
          </svg>
        </div>
        <div className="ml-[4px] flex h-[17px] w-4 shrink-0 items-center border border-white bg-[#f0f0f0]">
          <svg width="7" height="4" viewBox="0 0 7 4" fill="none" stroke="#000" className="ml-px"><path d="M.5.5l3 3 3-3" /></svg>
        </div>
      </div>

      <Toolbars />

      <div className="flex min-h-0 flex-1 flex-row pl-[3px] pt-px">
        <div className="flex w-[216px] flex-col border-l border-t border-[#a0a0a0] bg-white">
          <div className="flex h-[20px] items-center border-b border-[#c0c0c0] bg-[#808080] pl-[9px]">
            <svg width="18" height="17" viewBox="0 0 18 17">
              <path d="M3 5l5-5 5 5-2 4H6z" fill="#c020d8" stroke="#400860" strokeWidth=".7" />
              <path d="M9 5h8v8H9z" fill="#18a838" stroke="#104818" strokeWidth=".7" />
              <circle cx="10" cy="7" r="3.500" fill="#10e8f8" />
              <path d="M6 6l5 5-5 5-5-5z" fill="#1058e8" />
            </svg>
            <Caret className="ml-[3px] mt-[3px] w-[7px]" />
          </div>
          <div className="mt-[2px] ml-[8px] mr-px flex flex-1 flex-col border-r border-[#a0a0a0] bg-[#808080] pt-px font-['DejaVu_Sans_Condensed'] text-[11px] text-white">
            {ROWS.map((r, k) => <NameRow key={k} r={r} />)}
            <div className="-mt-[2px] flex items-center pl-[2px]">
              <svg width="4" height="7" viewBox="0 0 4 7"><path d="M.5.5l3 3-3 3z" fill="none" stroke="#000" /></svg>
              <span className="h-px w-[196px] bg-black" />
            </div>
          </div>
        </div>
        <div className="flex w-[150px] flex-col border-t border-[#a0a0a0] bg-white font-['DejaVu_Sans_Condensed'] text-[11px] text-white">
          <div className="ml-[2px] mr-[2px] flex h-[20px] items-center justify-end border-b border-[#c0c0c0] bg-[#808080] pr-[6px]">Msgs</div>
          <div className="mt-[2px] ml-[2px] mr-[2px] flex flex-1 flex-col border-r border-[#c0c0c0] bg-[#808080] pt-px">
            {ROWS.map((r, k) =>
              r.div ? (
                <div key={k} className="flex h-[17px] items-center"><span className="h-px flex-1 bg-white" /></div>
              ) : (
                <div key={k} className="flex h-[17px] pl-[2px]"><Label w={r.vw} box={142}>{r.v}</Label></div>
              )
            )}
            <div className="mt-px ml-[2px] h-px w-[139px] bg-black" />
          </div>
        </div>
        <div className="flex w-[1506px] flex-col border-t border-[#a0a0a0] bg-black">
          <div className="flex h-[20px] border-b border-[#c0c0c0] bg-black pl-[1476px] pt-[2px]"><span className="w-[3px] bg-[#ffd800]" /></div>
          <div className="h-[2px] bg-white" />
          <Waves />
        </div>
      </div>
    </div>
  );
}
